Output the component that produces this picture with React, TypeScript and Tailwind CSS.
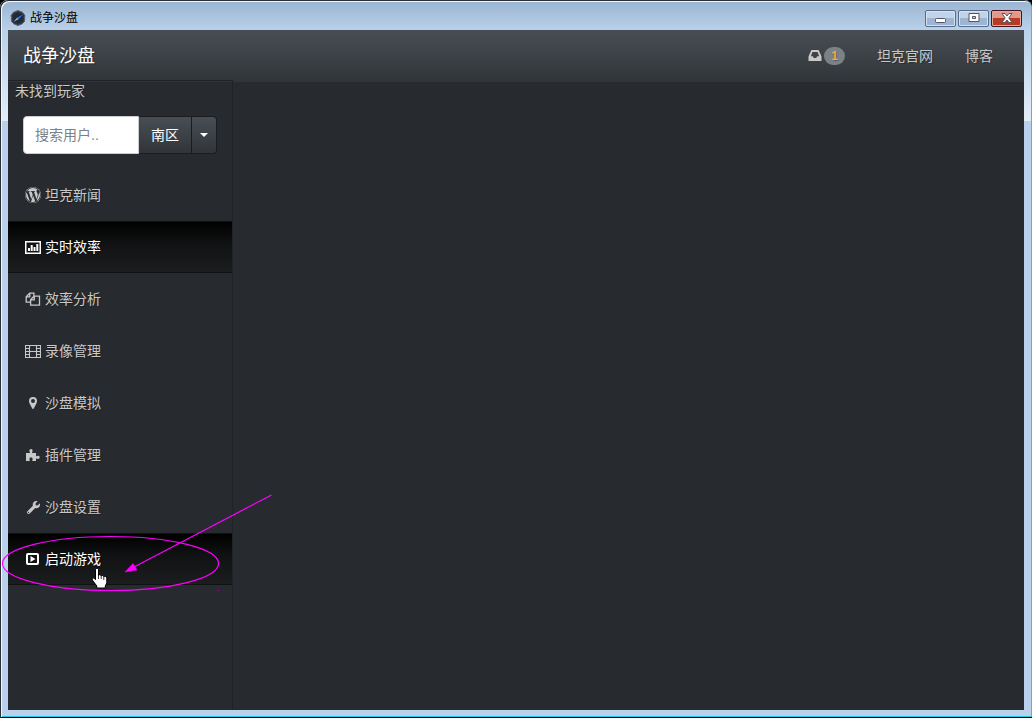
import type { ReactNode } from 'react'
import { FaWordpressSimple, FaWrench } from 'react-icons/fa'

interface IconProps {
  children: ReactNode
}

function Icon({ children }: IconProps) {
  return (
    <svg viewBox="0 0 16 16" className="w-4 h-4 shrink-0" fill="none" stroke="currentColor" aria-hidden="true">
      {children}
    </svg>
  )
}

const wordpressIcon = (
  <span className="flex items-center justify-center w-4 h-4 rounded-full bg-[#c8c8c8] text-[#272b30] shrink-0">
    <FaWordpressSimple className="w-4 h-4" />
  </span>
)

const chartIcon = (
  <Icon>
    <path d="M.75 2.750h14.500v11.500H.75z" strokeWidth="1.5" />
    <path d="M3 9h2v3H3zM5.700 6h2v6h-2zM8.500 8h2v4h-2zM11.300 5h2v7h-2z" fill="currentColor" stroke="none" />
  </Icon>
)

const copyIcon = (
  <Icon>
    <path d="M5.500 11.200H1.200V5.800L4.700 2.200h4.200v3M4.800 2.200v3.600H1.200M5.600 14.200V8.700L9 5.200h5.500v9zM9.300 5.200v3.600H5.600" strokeWidth="1.3" />
  </Icon>
)

const filmIcon = (
  <Icon>
    <path d="M.5 2.500h15v12H.5zM4.500 2.500v12M11.500 2.500v12M4.500 8.500h7M1 5.500h3.500M1 8.500h3.500M1 11.500h3.500M11.500 5.500H15M11.500 8.500H15M11.500 11.500H15" strokeWidth="1.1" />
  </Icon>
)

const markerIcon = (
  <Icon>
    <path
      d="M8 2a4 4 0 0 0-4 4c0 1 .3 1.700.6 2.400L7.200 13.600a.9.9 0 0 0 1.600 0L11.400 8.400C11.700 7.700 12 7 12 6a4 4 0 0 0-4-4zm0 2a2 2 0 1 1 0 4 2 2 0 0 1 0-4z"
      fill="currentColor"
      fillRule="evenodd"
      stroke="none"
    />
  </Icon>
)

const puzzleIcon = (
  <Icon>
    <path
      d="M1 6h3.800c.5-.4-.4-1.100-.4-2.200C4.400 2.700 5 2 6 2s1.600.7 1.600 1.800c0 1.100-.9 1.800-.4 2.200H11v3c.5.600 1.100-.2 2-.2 1.100 0 1.700.7 1.700 1.500S14.100 12 13 12c-.9 0-1.500-.8-2-.3V14H7.400c-.5-.5.3-1.100.3-2 0-1-.7-1.600-1.700-1.600s-1.600.6-1.600 1.600c0 .9.8 1.500.3 2H1z"
      fill="currentColor"
      stroke="none"
    />
  </Icon>
)

const wrenchIcon = (
  <span className="flex w-4 justify-center">
    <FaWrench className="w-[13px] h-[13px]" />
  </span>
)

const playIcon = (
  <Icon>
    <rect x="2" y="3" width="11" height="10" rx="1" strokeWidth="2" />
    <path d="M5.500 5l5 3-5 3z" fill="currentColor" stroke="none" />
  </Icon>
)

interface MenuItem {
  label: string
  icon: ReactNode
  active?: boolean
}

const menuItems: MenuItem[] = [
  { label: '坦克新闻', icon: wordpressIcon },
  { label: '实时效率', icon: chartIcon, active: true },
  { label: '效率分析', icon: copyIcon },
  { label: '录像管理', icon: filmIcon },
  { label: '沙盘模拟', icon: markerIcon },
  { label: '插件管理', icon: puzzleIcon },
  { label: '沙盘设置', icon: wrenchIcon },
  { label: '启动游戏', icon: playIcon, active: true },
]

function TitleBar() {
  const button =
    'flex items-center justify-center w-[31px] h-[17px] rounded-xs border border-[#566a89] bg-linear-to-b from-[#c3d3e7] from-45% to-[#9db5d2] to-50% shadow-[inset_0_0_0_1px_#d6e2f0]'
  return (
    <header className="flex items-center h-7 pl-0.5 pr-0.5 pt-1">
      <svg viewBox="0 0 16 16" className="w-4 h-4" aria-hidden="true">
        <path d="M8 .500l4.500 1.800 2.300 3-.3 6L12 14l-4 1.500L4 14l-2.500-2.700-.3-6 2.300-3z" fill="#30343e" stroke="#596170" />
        <circle cx="8" cy="8" r="5" fill="#222936" />
        <path d="M13 4.500L8.500 9.300 7 7.800z" fill="#2f82ee" />
        <path d="M3.500 11.800L7 7.800l1.500 1.500z" fill="#a8b4c2" />
      </svg>
      <h1 className="ml-1 text-xs text-black">战争沙盘</h1>
      <div className="flex gap-0.5 ml-auto">
        <button type="button" aria-label="最小化" className={button}>
          <svg viewBox="0 0 12 8" className="w-3 h-2 mt-1"><rect x=".5" y="2.500" width="10" height="4" rx="1" fill="#fff" stroke="#535666" /></svg>
        </button>
        <button type="button" aria-label="最大化" className={button}>
          <svg viewBox="0 0 12 10" className="w-3 h-2.5"><path d="M1 .5h10v8H1zM4.500 3.500h3v2h-3z" fill="#fff" fillRule="evenodd" stroke="#535666" /></svg>
        </button>
        <button
          type="button"
          aria-label="关闭"
          className="flex items-center justify-center w-[31px] h-[17px] rounded-xs border border-[#431422] bg-linear-to-b from-[#df9a8b] from-45% to-[#b93a22] to-50% shadow-[inset_0_0_0_1px_#e5a99d]"
        >
          <svg viewBox="0 0 12 10" className="w-3 h-2.5"><path d="M1 .5h3l2 2.500 2-2.500h3L7.800 5 11 9.500H8L6 7 4 9.500H1L4.200 5z" fill="#fff" stroke="#535666" /></svg>
        </button>
      </div>
    </header>
  )
}

function NavBar() {
  return (
    <nav className="flex items-center h-[52px] px-[15px] bg-linear-to-b/srgb from-[#484e55] via-[#3a3f44] via-60% to-[#313539] text-[#c8c8c8]">
      <a href="#" className="text-lg leading-6 text-white">战争沙盘</a>
      <div className="flex items-center gap-8 ml-auto pr-4">
        <a href="#" className="flex items-center gap-0.5">
          <svg viewBox="0 0 14 14" className="w-3.5 h-3.5" aria-hidden="true">
            <path d="M3.400 1h7.200L13.500 7.500V12H.5V7.500zM4.400 3L2.900 7.300h2L5.700 9h2.600l.8-1.700h2L9.600 3z" fill="currentColor" fillRule="evenodd" />
          </svg>
          <span className="flex items-center justify-center w-[21px] h-[18px] rounded-[9px] bg-[#7a8288] text-xs font-bold text-[#f8a54a]">1</span>
        </a>
        <a href="#">坦克官网</a>
        <a href="#">博客</a>
      </div>
    </nav>
  )
}

function Sidebar() {
  return (
    <aside className="w-[225px] shrink-0 border-r border-t border-[#1f2226]">
      <p className="px-[7px] leading-5">未找到玩家</p>
      <form className="flex h-[38px] m-[15px]">
        <input
          type="text"
          aria-label="搜索用户"
          placeholder="搜索用户.."
          className="flex-1 min-w-0 px-[11px] rounded-l-sm border border-[#ccc] bg-white text-[#272b30] placeholder:text-[#7a8288] outline-none"
        />
        <button type="button" className="w-[53px] border-y border-r border-[#1a1c1f] bg-linear-to-b/srgb from-[#484e55] via-[#3a3f44] via-60% to-[#313539] text-white">
          南区
        </button>
        <button
          type="button"
          aria-label="选择大区"
          className="flex items-center justify-center w-[25px] rounded-r-sm border-y border-r border-[#1a1c1f] bg-linear-to-b/srgb from-[#484e55] via-[#3a3f44] via-60% to-[#313539] text-white"
        >
          <svg viewBox="0 0 8 4" className="w-2 h-1"><path d="M0 0h8L4 4z" fill="currentColor" /></svg>
        </button>
      </form>
      <ul>
        {menuItems.map(item => (
          <li key={item.label}>
            <a
              href="#"
              className={
                item.active
                  ? 'flex items-center gap-1 h-[52px] pl-[17px] border-y border-[#101112] bg-linear-to-b/srgb from-black via-[#101112] via-40% to-[#1b1d1f] text-white'
                  : 'flex items-center gap-1 h-[52px] pl-[17px]'
              }
            >
              {item.icon}
              {item.label}
            </a>
          </li>
        ))}
      </ul>
    </aside>
  )
}

// hand drawn pointer and arrow that show where to click
function Annotation() {
  return (
    <svg viewBox="0 0 280 110" className="absolute left-0 top-[490px] w-[280px] h-[110px] pointer-events-none" aria-hidden="true">
      <ellipse cx="110.500" cy="73.500" rx="108" ry="27" fill="none" stroke="#f0f" strokeWidth="1.2" />
      <path d="M271.500 5L134 77" stroke="#f0f" strokeWidth="1.2" />
      <path d="M125 82l8-8.500 4 6.500z" fill="#f0f" stroke="#f0f" strokeWidth=".5" />
      <path d="M218 100h1v1h-1z" fill="#a0a" />
      <path
        d="M95.500 79.500c0-1.800 3-1.800 3 0v6c.3-1.300 2.700-1 2.700.5.500-1 2.600-.6 2.600.8.700-.8 3-.3 3 1.200v5l-1.500 3v2h-8.500v-2l-4.500-6c-.8-1.500 1-2.700 2-1.500l1.200 1.200z"
        fill="#fff"
        stroke="#000"
      />
      <path d="M98.500 85v4M101.200 86v3M103.800 87v3" stroke="#000" strokeWidth=".8" />
    </svg>
  )
}

export default function App() {
  return (
    <div className="bg-black font-['Liberation_Sans','Noto_Sans_CJK_SC',sans-serif] text-sm">
      <div className="relative flex flex-col min-h-screen pt-0.5 px-2 pb-2 rounded-t-lg bg-[linear-gradient(#99b4d1,#b9d1ea_30px,#e3edf8_121px,#b9d1ea_121px)] shadow-[inset_1px_1px_0_#2a2d33,inset_0_-1px_0_#000,inset_2px_2px_0_#f5f9fd,inset_-1px_-2px_0_#27c8e5]">
        <TitleBar />
        <div className="flex flex-col flex-1 bg-[#272b30] text-[#c8c8c8] [text-shadow:1px_1px_1px_rgba(0,0,0,0.3)]">
          <NavBar />
          <div className="flex flex-1 -mt-0.5">
            <Sidebar />
            <main className="flex-1" />
          </div>
        </div>
        <Annotation />
      </div>
    </div>
  )
}
